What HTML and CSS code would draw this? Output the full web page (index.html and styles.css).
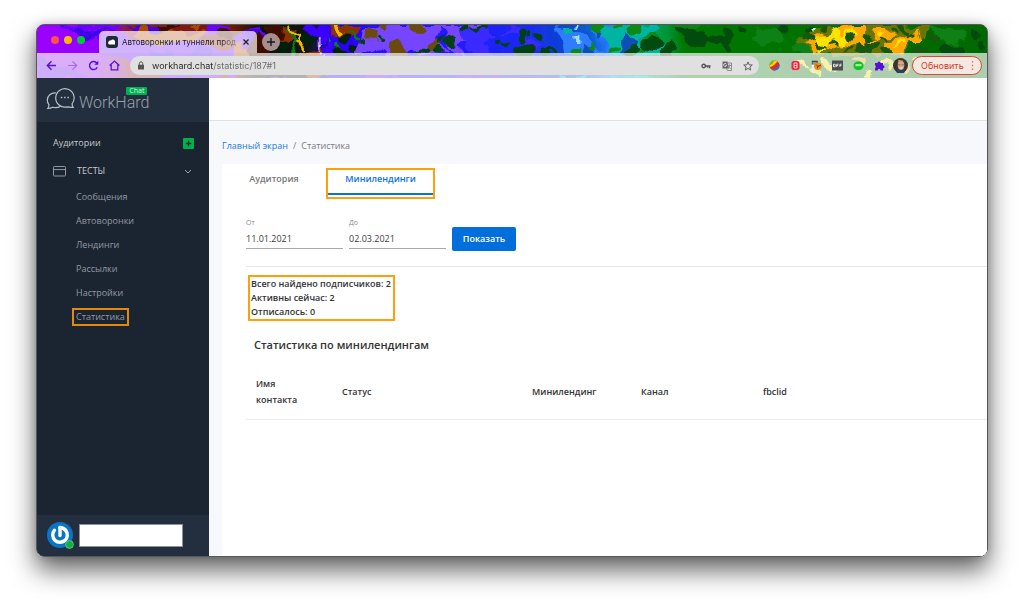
FILE: index.html
```html
<!DOCTYPE html>
<html lang="ru">
<head>
<meta charset="utf-8">
<title>Автоворонки и туннели продаж</title>
<link rel="stylesheet" href="styles.css">
</head>
<body>
<div class="window">
  <header class="chrome">
    <svg class="theme" viewBox="0 0 951 54" preserveAspectRatio="xMinYMin slice" aria-hidden="true">
      <defs>
        <linearGradient id="base">
          <stop offset="0" stop-color="#9a00ff"/><stop offset=".065" stop-color="#9600ff"/>
          <stop offset=".1" stop-color="#8c1a30"/><stop offset=".2" stop-color="#7c1800"/>
          <stop offset=".24" stop-color="#04160c"/><stop offset=".285" stop-color="#101808"/>
          <stop offset=".31" stop-color="#2c00ff"/><stop offset=".44" stop-color="#2418ff"/>
          <stop offset=".52" stop-color="#1a2cf0"/><stop offset=".56" stop-color="#0848c8"/>
          <stop offset=".585" stop-color="#0a60d8"/><stop offset=".6" stop-color="#2b7cff"/>
          <stop offset=".625" stop-color="#00a89c"/><stop offset=".66" stop-color="#00983c"/>
          <stop offset=".68" stop-color="#007800"/><stop offset="1" stop-color="#006800"/>
        </linearGradient>
        <filter id="ripple" x="0" y="0" width="1" height="1">
          <feTurbulence type="fractalNoise" baseFrequency=".07" numOctaves="2" seed="4"/>
          <feDisplacementMap in="SourceGraphic" scale="15" xChannelSelector="R" yChannelSelector="G"/>
        </filter>
      </defs>
      <path fill="url(#base)" d="M0 0h951v54H0z"/>
      <g filter="url(#ripple)">
      <path fill="url(#base)" d="M0 0h951v54H0z"/>
      <g fill="#6a00ff">
        <path d="M22 0h62l-8 6-20-2-8 5-24-4zM60 12l20-4 30 12 40-6-20 22-30 8-18-12-22-4zM0 36l24 4 30 14H0z"/>
        <path d="M128 24l30-12 18 14 22-6 8 18-14 16h-60l-12-12z"/>
        <path d="M198 10l26-4 8 8-12 8-26 4zM170 0h22l-6 8-20 2z"/>
      </g>
      <g fill="#4200e8">
        <path d="M24 2l40 4 14-4-22 12zM88 0l20 2 20-2-12 8-16-3zM110 22l16 6 14-4-4 10-22 2z"/>
        <path d="M150 30l14-8 12 10-8 14-18-4zM212 8h14v8h-16z"/>
      </g>
      <path fill="#b04800" d="M94 10l14-8 10 8 18-6 12 7 20-5-6 12-24-3-18 6zM196 18l18 4-6 16-14-4zM150 0h16l-8 7z"/>
      <path fill="#3d0800" d="M120 0h24l-8 6-16-1zM184 2l14 2-4 10-14-4zM212 18l14-6 12 10-10 12-16-4zM228 0h18l4 14-14 6z"/>
      <path fill="#8c3200" d="M246 0l14 2-4 14-14 2zM266 30l18-8 10 12-4 20h-20zM290 0h36l-14 13-18-3z"/>
      <g fill="none" stroke-linecap="round">
        <path stroke="#0c7a18" stroke-width="3" d="M250 2l10 14-4 10 6 10M286 8l8 14-10 10M300 20l8 8M246 34l20 4M310 6l10 6"/>
        <path stroke="#f2b600" stroke-width="3" d="M252 0l6 8 8 2-2 10 4 6M283 28l4 4M262 18l3 4"/>
        <path stroke="#f2b600" stroke-width="5" d="M299 2l4 5"/>
        <path stroke="#3a00ff" stroke-width="9" d="M286 2v14M294 24l-6 8M274 2l6 4"/>
        <path stroke="#b98cff" stroke-width="2" d="M282 12v18M286 34l2-3"/>
        <path stroke="#fffce0" stroke-width="2" stroke-dasharray="1 7" d="M283 12v22"/>
        <path stroke="#04200c" stroke-width="9" d="M307 14h1M300 26l8 4M318 24l3 4M276 12l-6 4M246 20v4"/>
      </g>
      <path fill="#7644ff" d="M324 6l30-6h50l-6 14 16 12-30 4-8-8-20 14-16-14-22 8zM402 0h44l-8 14-14 4 4 12 20 6-14 2-22-16zM450 14l-8 12-6-8z"/>
      <path fill="#3a2cff" d="M424 8l22-6 16 8-14 8 10 16-24-6zM476 0l12 11-22-2zM490 14l18 6-14 6 10 10-20-2z"/>
      <g fill="none" stroke-linecap="round" stroke="#6b4c08">
        <path stroke-width="10" d="M332 10l6 1M378 3l5 4"/>
        <path stroke-width="14" d="M360 23l4 6"/>
        <path stroke-width="8" d="M348 2h1M395 20l6-3"/>
      </g>
      <g fill="none" stroke-linecap="round" stroke="#064018">
        <path stroke-width="5" d="M324 15h1M346 12v1M388 24l4-1M404 14v1M470 20h1M494 9v1"/>
        <path stroke-width="8" d="M402 24h1M412 15l6 2M428 4h2M462 18h1M503 11h1"/>
        <path stroke-width="11" d="M486 11v2M482 26l8-1"/>
        <path stroke-width="3" d="M436 4l14 1M506 26l10 1M380 27l12-2"/>
      </g>
      <path fill="#2d7cff" d="M518 2l24 4 12 12 10 12h-36l-2-14zM556 0h10l-2 12-8-4z"/>
      <path fill="#00b4a4" d="M528 2l10 0 2 6-8 1zM564 4l20-4 38 0-20 14 6 10-14 6h-18zM606 12l18 8 10 10h-28z"/>
      <path fill="#0d50b4" d="M544 16l10 6 4 8h-8zM562 8l8 2-4 6zM588 12l14 4-4 14h-16z"/>
      <path fill="#9de" d="M540 0h3v3h-3zM540 12h3v3h-3z"/>
      <g fill="none" stroke-linecap="round" stroke="#078a16">
        <path stroke-width="10" d="M560 3l4 2M538 27l4 0M594 7l6-4M614 12l6 4"/>
        <path stroke-width="5" d="M554 20v2M574 26l6-5M582 2h2M606 24v1"/>
      </g>
      <g fill="none" stroke-linecap="round" stroke="#024c08">
        <path stroke-width="14" d="M612 18l8 2M655 12l10 2M910 25h12"/>
        <path stroke-width="9" d="M594 26l6-2M642 4l6 2M676 14l6 2M690 9v5M634 22l-4 6M723 12h10M784 22l8 2"/>
        <path stroke-width="6" d="M692 21v1M706 4h2M744 4l6 2M760 22h3M772 6l4-2M933 6l6 6M946 20v6"/>
      </g>
      <path fill="#0f8012" d="M636 0h36l-14 5-20-1zM718 6l22-4 8 12-18 8-14-6zM890 2l32 2 8 12-20 2-14-8zM756 20l14-8 12 16h-24z"/>
      <path fill="#6b7600" d="M762 14l20-12 20 4 20-6h44l28 2-4 14-14-4-10 18h-88z"/>
      <path fill="#ffa800" d="M768 18l12-8 14 4 6-10 14-4h14v14l14 2-14 8-22-4-12 7-20-4zM836 4l12 0 12 8-20 4zM850 18l18-6 14-8 4 12-14 0-6 12h-16zM778 30l-6-10 10 4z"/>
      <path fill="#ffe300" d="M776 14l16-2 6-8 6 8 10-10 4 10-10 8-12-4-8 8zM840 8l8-2-2 6zM858 20l8-6 2 6zM782 26l3-5 3 5z"/>
      <g fill="none" stroke-linecap="round" stroke="#17580c">
        <path stroke-width="6" d="M770 10l6 4M786 5v1M828 10l6 4M822 24l14 2M848 26h6M882 22l4 2M866 4l6 3M834 20l6 2"/>
        <path stroke-width="3" d="M798 16l5 3M812 10l2 4M808 24h6M846 12l6 3M872 12l6-4M780 20l8 3M856 6l4 2M894 14h6"/>
      </g>
      <path fill="#b8ffe0" d="M775 3h4l-2 3zM793 20h5l-2 2z"/>
      <g fill="none" stroke-linecap="round" stroke="#f0e000" stroke-width="4">
        <path d="M764 38l6 4M774 44l8 4M786 36l12 6M830 52l4-6M848 38l6 4M880 34l6 4"/>
        <path stroke="#e0a000" d="M818 34l8 2M868 46l6-4M892 40l8-4"/>
        <path stroke="#03650c" stroke-width="8" d="M752 34l4 6M792 48h6M840 46l6 4M876 44h4M920 38l10 8"/>
        <path stroke="#6a00ff" stroke-width="4" d="M120 53l40-1M236 53h12M330 53h36M420 53h42"/>
        <path stroke="#00b4d4" stroke-width="4" d="M526 53h26M580 53h38"/>
      </g>
      </g>
    </svg>

    <div class="tabstrip">
      <div class="lights"><span class="light red"></span><span class="light amber"></span><span class="light green"></span></div>
      <div class="browser-tab">
        <svg width="12" height="12" viewBox="0 0 12 12" aria-hidden="true"><rect width="12" height="12" rx="3" fill="#1e2a38"/><path d="M3 5.200a2 2 0 0 1 2-.8 2.200 2.200 0 0 1 4 1v3H4a1.700 1.700 0 0 1-1-3.200z" fill="#fff"/></svg>
        <span class="tab-title">Автоворонки и туннели прод</span>
        <button class="icon-btn" aria-label="Закрыть вкладку"><svg width="8" height="8" viewBox="0 0 8 8"><path d="M1.500 1.500l5 5m0-5l-5 5" stroke="#222" stroke-width="1.300"/></svg></button>
      </div>
      <button class="new-tab" aria-label="Новая вкладка"><svg width="10" height="10" viewBox="0 0 10 10"><path d="M5 1v8M1 5h8" stroke="#16161c" stroke-width="1.400"/></svg></button>
    </div>

    <div class="toolbar">
      <nav class="nav-icons" aria-label="Навигация">
        <button class="icon-btn" aria-label="Назад"><svg width="11" height="11" viewBox="0 0 11 11" fill="none" stroke="#5a10d8" stroke-width="1.400"><path d="M10 5.500H1.500M5.500 1.300L1.300 5.500l4.200 4.200"/></svg></button>
        <button class="icon-btn" aria-label="Вперёд"><svg width="11" height="11" viewBox="0 0 11 11" fill="none" stroke="#a868ea" stroke-width="1.200"><path d="M1 5.500h8.500M5.500 1.300l4.200 4.200-4.200 4.200"/></svg></button>
        <button class="icon-btn" aria-label="Обновить страницу"><svg width="11" height="11" viewBox="0 0 11 11" fill="none" stroke="#5a10d8" stroke-width="1.400"><path d="M9.200 7.200A4 4 0 1 1 8.800 3.200"/><path d="M10.300.8v4H6.300z" fill="#5a10d8" stroke="none"/></svg></button>
        <button class="icon-btn" aria-label="Главная"><svg width="11" height="11" viewBox="0 0 11 11" fill="none" stroke="#5a10d8" stroke-width="1.300"><path d="M.6 5.600l4.900-4.500 4.900 4.500M2.200 4.800v5h6.600v-5"/></svg></button>
      </nav>
      <div class="address">
        <svg width="8" height="9" viewBox="0 0 8 9" aria-hidden="true"><path d="M1 3.800h6v4.700H1z" fill="#555"/><path d="M2.300 4V2.500a1.700 1.700 0 0 1 3.400 0V4" fill="none" stroke="#555"/></svg>
        <input class="url" type="text" aria-label="Адрес" value="workhard.chat/statistic/187#1">
        <div class="address-icons">
          <button class="icon-btn" aria-label="Пароли"><svg width="10" height="10" viewBox="0 0 10 10" fill="none" stroke="#555"><circle cx="2.700" cy="5" r="1.700" stroke-width="1.500"/><path d="M4.500 5h5M8.500 5v2.200M6.500 5v1.500" stroke-width="1.500"/></svg></button>
          <button class="icon-btn" aria-label="Перевести"><svg width="10" height="10" viewBox="0 0 10 10"><path d="M.5.500h5l1.300 7H.5z" fill="#666"/><path d="M5.500 2h4v7.500h-4l-1-2M6 4.500h3M7.500 3.500v1c0 1.500-1 2.500-1.500 2.800M6.500 5.500L8.500 8" fill="none" stroke="#777" stroke-width=".8"/><path d="M4.300 3a1.500 1.500 0 1 0 .3 1.300H3.300" fill="none" stroke="#eee" stroke-width=".8"/></svg></button>
          <button class="icon-btn" aria-label="В закладки"><svg width="10" height="10" viewBox="0 0 10 10"><path d="M5 .9l1.200 2.900 3.100.2L6.900 6l.8 3L5 7.400 2.300 9l.8-3L.7 4l3.100-.2z" fill="none" stroke="#555" stroke-width=".9"/></svg></button>
        </div>
      </div>
      <div class="extensions">
        <svg width="11" height="11" viewBox="0 0 11 11"><circle cx="5.500" cy="5.500" r="5" fill="#e8291f"/><path d="M.8 7.200A5 5 0 0 1 8.200 1.300Q6 5.500.8 7.200z" fill="#f7d900"/><path d="M.5 5.500A5 5 0 0 1 5.500.5Q4 4 .5 5.500z" fill="#69bd22"/><path d="M3.300 10Q8 8.500 10.300 4a5 5 0 0 1-7 6z" fill="#2374c9"/></svg>
        <svg width="11" height="11" viewBox="0 0 11 11"><rect x="1.500" y="1" width="8" height="9" rx="2.500" fill="#f51d3c"/><path d="M4 3h3v5H4zM4 5.500h3" fill="none" stroke="#ffd8dc"/></svg>
        <svg width="11" height="11" viewBox="0 0 11 11"><path d="M.8.800h6v4h-6z" fill="#444"/><path d="M.8 4.500h5v5.700h-5z" fill="#eee"/><path d="M1.500 3h4" stroke="#ddd"/><circle cx="6.700" cy="6.300" r="3.700" fill="#f08a18"/><path d="M5 4.500l2 2L10 5M6.500 6.500v2" fill="none" stroke="#5a2800" stroke-width=".9"/></svg>
        <svg width="11" height="11" viewBox="0 0 11 11"><path d="M0 .5h11v10H0z" fill="#4a4e50"/><path d="M1.500 4.200h1.700v2.600H1.500zM4.700 7V4.200h1.800M4.700 5.600h1.500M7.900 7V4.200h1.700M7.900 5.600h1.500" fill="none" stroke="#fff" stroke-width=".8"/></svg>
        <svg width="11" height="11" viewBox="0 0 11 11"><rect x=".5" y="1.500" width="10" height="8.500" rx="4.200" fill="#12c322"/><path d="M2.500 4h6v2.200h-6z" fill="#9dff93"/></svg>
        <svg width="11" height="11" viewBox="0 0 11 11"><path d="M1 3h2.500a1.500 1.500 0 1 1 3 0H9v2.300a1.500 1.500 0 1 1 0 3v2.200H6.500a1.400 1.400 0 0 0-2.800 0H1V8a1.500 1.500 0 0 0 0-2.700z" fill="#5610d8"/></svg>
      </div>
      <svg class="profile" width="15" height="15" viewBox="0 0 15 15"><circle cx="7.500" cy="7.500" r="7.500" fill="#3a3330"/><path d="M3 14a7.500 7.500 0 0 0 9 0l-1.500-3.500h-6z" fill="#28435c"/><ellipse cx="8" cy="7.300" rx="3.300" ry="4.600" fill="#d7a98c"/><path d="M4.500 5a4 4 0 0 1 7-1l-2-2-4 0z" fill="#e9bc38"/><path d="M5 6.800h2.300m1.200 0h2.300" stroke="#7a5a4c" stroke-width=".8"/><path d="M6.500 10h3" stroke="#fff" stroke-width=".8"/></svg>
      <button class="update">Обновить<svg width="3" height="11" viewBox="0 0 3 11"><path d="M.8 1h1.400v1.400H.8zm0 3.800h1.400v1.400H.8zm0 3.800h1.400V10H.8z" fill="#ee6a5c"/></svg></button>
    </div>
  </header>

  <div class="app">
    <aside class="sidebar">
      <div class="brand">
        <svg width="29" height="24" viewBox="0 0 29 24" fill="none" stroke="#b9c1c8" stroke-width="1.200"><path d="M26.200 16.500a9.200 9.200 0 1 0-5 3.300c2 .1 3.800.8 6 .7-.9-1.300-1.200-2.400-1-4z"/><path d="M10 6C5 5.500 1.300 8.600 1.300 13c0 2 .6 3.500 1.700 4.800-.1 1.500-.5 2.700-1.200 3.700 2-.1 3.500-.5 5-1.300 2.600.8 5.400.4 7.600-1"/><path d="M14.800 10.600h1.500M18.100 10.600h1.500M21.400 10.600h1.500" stroke-width="1.500"/></svg>
        <span class="brand-name">WorkHard<span class="brand-badge">Chat</span></span>
      </div>
      <nav class="menu">
        <div class="menu-head"><span>Аудитории</span>
          <button class="icon-btn" aria-label="Добавить"><svg width="11" height="11" viewBox="0 0 11 11"><rect width="11" height="11" rx="1" fill="#00b050"/><path d="M5.500 2.800v5.400M2.800 5.500h5.400" stroke="#123524" stroke-width="1.300"/></svg></button>
        </div>
        <button class="group">
          <svg width="13" height="11" viewBox="0 0 13 11" fill="none" stroke="#9299a1"><rect x=".5" y=".5" width="12" height="9.500" rx=".8"/><path d="M.5 3.600h12"/></svg>
          <span class="group-name">ТЕСТЫ</span>
          <svg width="8" height="5" viewBox="0 0 8 5" fill="none" stroke="#9ca3aa"><path d="M1 1l3 3 3-3"/></svg>
        </button>
        <ul class="submenu">
          <li><a href="#">Сообщения</a></li>
          <li><a href="#">Автоворонки</a></li>
          <li><a href="#">Лендинги</a></li>
          <li><a href="#">Рассылки</a></li>
          <li><a href="#">Настройки</a></li>
          <li><a class="marked" href="#">Статистика</a></li>
        </ul>
      </nav>
      <div class="user">
        <svg width="28" height="28" viewBox="0 0 28 28"><circle cx="13" cy="13" r="13" fill="#0b74c4"/><path d="M13 5.500v8" stroke="#fff" stroke-width="3.400" stroke-linecap="round"/><path d="M7.500 8.200a7.300 7.300 0 1 0 11.200.2" fill="none" stroke="#fff" stroke-width="3.400" stroke-linecap="round"/><path d="M13 5.500q3.500.2 5.700 2.900" fill="none" stroke="#fff" stroke-width="3.400" stroke-linecap="round"/><circle cx="22.500" cy="22.500" r="3.900" fill="#00b63e" stroke="#8eb99c" stroke-width=".8"/></svg>
        <span class="user-name"></span>
      </div>
    </aside>

    <main class="main">
      <div class="topbar"></div>
      <nav class="crumbs"><a href="#">Главный экран</a><span>/</span><span>Статистика</span></nav>
      <section class="card">
        <div class="tabs" role="tablist">
          <button class="tab" role="tab" aria-selected="false">Аудитория</button>
          <button class="tab active" role="tab" aria-selected="true">Минилендинги</button>
        </div>
        <div class="card-body">
          <form class="filter">
            <label class="field">От<input type="text" value="11.01.2021"></label>
            <label class="field">До<input type="text" value="02.03.2021"></label>
            <button class="submit" type="button">Показать</button>
          </form>
          <div class="totals">
            <div>Всего найдено подписчиков: 2</div>
            <div>Активны сейчас: 2</div>
            <div>Отписалось: 0</div>
          </div>
          <h2 class="title">Статистика по минилендингам</h2>
          <table class="stats">
            <colgroup><col class="c-name"><col class="c-status"><col class="c-landing"><col class="c-channel"><col></colgroup>
            <thead><tr><th>Имя контакта</th><th>Статус</th><th>Минилендинг</th><th>Канал</th><th>fbclid</th></tr></thead>
          </table>
        </div>
      </section>
    </main>
  </div>
</div>
</body>
</html>
```

FILE: styles.css
```css
* { box-sizing: border-box; }

body {
  margin: 0;
  min-height: 100vh;
  padding: 24px 36px 48px;
  display: flex;
  background: #fff;
  font-family: "Open Sans", "Noto Sans", sans-serif;
  font-size: 9px;
  line-height: 14px;
  color: #333;
}

button, input { font: inherit; color: inherit; }
button { border: 0; padding: 0; background: none; cursor: pointer; }
svg { display: block; flex: none; }
.icon-btn { display: block; flex: none; }

.window {
  flex: 1;
  min-width: 0;
  display: flex;
  flex-direction: column;
  border: 1px solid #55585c;
  border-radius: 8px;
  overflow: hidden;
  box-shadow: 0 13px 26px rgba(0, 0, 0, .62), 0 0 8px rgba(0, 0, 0, .16);
}

/* Browser frame */
.chrome {
  position: relative;
  font-family: Inter, "Liberation Sans", sans-serif;
  background: #006800;
}
.theme { position: absolute; inset: 0; width: 100%; height: 100%; }
.tabstrip {
  position: relative;
  display: flex;
  align-items: flex-end;
  height: 28px;
  padding-left: 14px;
}
.lights { display: flex; gap: 5px; padding-bottom: 9px; }
.light { width: 8px; height: 8px; border-radius: 50%; }
.red { background: #ff4f48; }
.amber { background: #ffb900; }
.green { background: #00c93a; }
.browser-tab {
  display: flex;
  align-items: center;
  width: 158px;
  height: 22px;
  margin-left: 14px;
  padding: 0 7px;
  border-radius: 5px 5px 0 0;
  background: rgba(255, 255, 255, .7);
}
.tab-title {
  flex: 1;
  margin: 0 4px;
  white-space: nowrap;
  font-size: 8px;
  color: #1c1c22;
  mask-image: linear-gradient(90deg, #000 85%, rgba(0, 0, 0, .2));
}
.new-tab {
  display: grid;
  place-items: center;
  width: 18px;
  height: 18px;
  margin: 0 0 2px 5px;
  border-radius: 50%;
  background: #a48e8e;
}
.toolbar {
  position: relative;
  display: flex;
  align-items: center;
  height: 25px;
  padding: 0 5px 0 9px;
  background: rgba(248, 248, 248, .7);
}
.nav-icons { display: flex; gap: 10px; margin-right: 10px; }
.address {
  flex: 1;
  display: flex;
  align-items: center;
  gap: 7px;
  height: 19px;
  padding: 0 6px 0 7px;
  border-radius: 10px;
  background: #e0e0e0;
}
.url {
  flex: 1;
  min-width: 0;
  border: 0;
  padding: 0;
  outline: 0;
  background: linear-gradient(90deg, #222 61px, #686868 61px);
  background-clip: text;
  color: transparent;
}
.address-icons { display: flex; gap: 11px; }
.extensions { display: flex; gap: 10px; margin: 0 8px 0 10px; }
.profile { margin-right: 4px; }
.update {
  display: flex;
  align-items: center;
  justify-content: space-between;
  width: 70px;
  height: 19px;
  padding: 0 7px 0 8px;
  border: 1px solid #e0453a;
  border-radius: 10px;
  background: #f3e9e0;
  color: #d8372b;
}

/* Application */
.app { flex: 1; display: flex; background: #f7f8fc; }
.sidebar {
  flex: none;
  display: flex;
  flex-direction: column;
  width: 172px;
  background: #1b2431;
  color: #c6cacf;
}
.brand {
  display: flex;
  align-items: center;
  gap: 4px;
  height: 44px;
  padding: 0 9px 3px;
  background: #232f3e;
}
.brand-name {
  position: relative;
  margin-top: 8px;
  font: 300 16px/20px Roboto, sans-serif;
  color: #98a1aa;
}
.brand-badge {
  position: absolute;
  top: -6px;
  right: 2px;
  width: 21px;
  border-radius: 1px;
  background: #00b050;
  color: #d9f5e4;
  font: 7px/8px "Open Sans", sans-serif;
  text-align: center;
}
.menu { flex: 1; padding: 14px 15px 0 16px; }
.menu-head { display: flex; justify-content: space-between; align-items: center; }
.group {
  display: flex;
  align-items: center;
  width: 100%;
  margin-top: 14px;
  padding-right: 2px;
}
.group-name { flex: 1; margin-left: 11px; text-align: left; }
.submenu { list-style: none; margin: 7px 0 0; padding: 0 0 0 19px; color: #949ba4; }
.submenu li { display: flex; align-items: center; height: 24px; }
.submenu a { padding: 0 2px; border: 2px solid transparent; color: inherit; text-decoration: none; }
.submenu .marked { border-color: #e58a08; }
.user {
  display: flex;
  align-items: center;
  gap: 4px;
  height: 41px;
  padding: 0 26px 0 10px;
  background: #232f3e;
}
.user-name { flex: 1; height: 23px; background: #fff; border: 1px solid #8b949e; }

.main { flex: 1; min-width: 0; display: flex; flex-direction: column; }
.topbar { height: 43px; background: #fff; border-bottom: 1px solid #dfe1e5; }
.crumbs { display: flex; gap: 5px; padding: 18px 13px 11px; color: #777c84; }
.crumbs a { color: #1b7ae0; text-decoration: none; }
.card { flex: 1; margin-left: 13px; background: #fff; }
.tabs { display: flex; padding-top: 4px; }
.tab {
  width: 104px;
  height: 31px;
  padding-bottom: 9px;
  font-weight: 600;
  color: #777;
}
.tab.active {
  width: 109px;
  border: 2px solid #ff9f0a;
  box-shadow: inset 0 -2px #fff, inset 0 -4px #0d6fd8;
  color: #1173dc;
}
.card-body { padding-left: 24px; }
.filter {
  display: flex;
  align-items: flex-end;
  gap: 6px;
  margin-top: 17px;
  padding-bottom: 15px;
  border-bottom: 1px solid #e5e6e8;
}
.field { display: block; width: 97px; margin-bottom: 2px; font-size: 7px; color: #8a8a8a; }
.field input {
  display: block;
  width: 100%;
  height: 19px;
  border: 0;
  border-bottom: 1px solid #a8a8a8;
  padding: 0 0 2px;
  background: none;
  font-size: 9px;
  color: #3c3c3c;
}
.submit {
  width: 64px;
  height: 24px;
  border-radius: 2px;
  background: #006fdc;
  color: #fff;
  font-weight: 600;
}
.totals {
  width: max-content;
  margin: 8px 0 0 2px;
  padding: 0 2px 0 1px;
  border: 2px solid #ff9f0a;
  font-weight: 600;
}
.title { margin: 16px 0 0 8px; font-size: 11px; font-weight: 600; line-height: 16px; }
.stats { width: 100%; margin-top: 13px; border-collapse: collapse; table-layout: fixed; }
.stats th {
  height: 53px;
  padding: 0 32px 0 10px;
  border-bottom: 1px solid #ececec;
  font-weight: 600;
  line-height: 16px;
  text-align: left;
}
.c-name { width: 86px; }
.c-status { width: 190px; }
.c-landing { width: 109px; }
.c-channel { width: 122px; }
```
